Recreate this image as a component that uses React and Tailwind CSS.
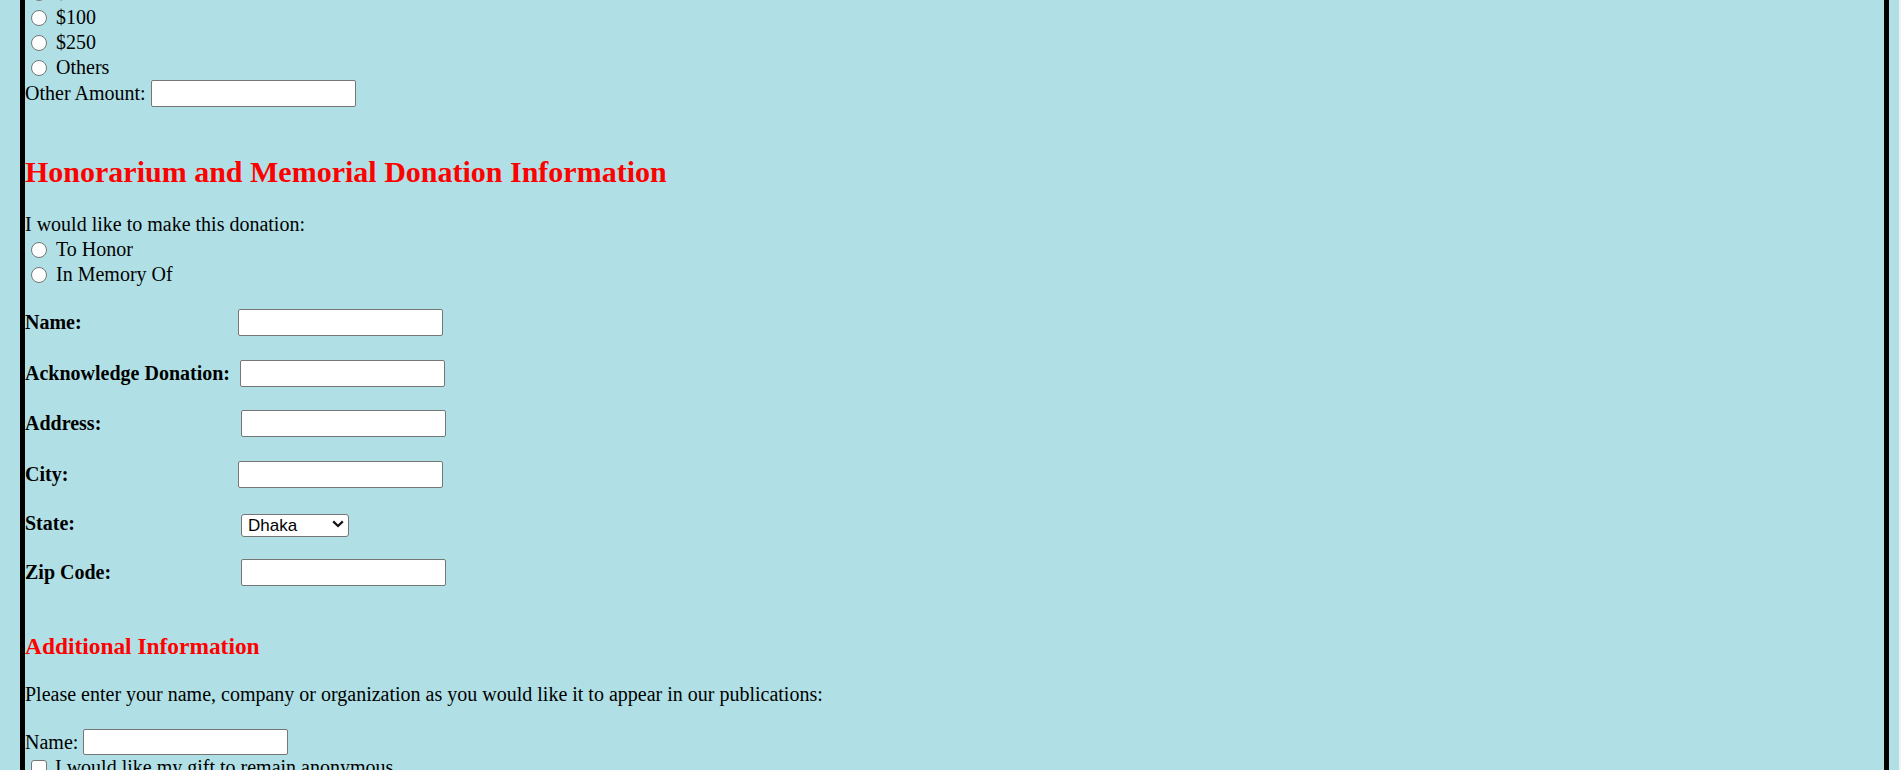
import React from "react";

function Radio({ label, name }) {
  return (
    <div className="flex h-[25px] items-center">
      <input
        type="radio"
        name={name}
        className="ml-[6px] h-[16px] w-[16px] shrink-0 appearance-none rounded-full border border-[#767676] bg-white"
      />
      <span className="ml-[9px]">{label}</span>
    </div>
  );
}

function Field({ label, labelW, mt, children, h = "h-[27px]" }) {
  return (
    <div className={`flex ${h} items-center ${mt}`}>
      <span className={`${labelW} shrink-0 font-bold`}>{label}</span>
      {children}
    </div>
  );
}

function TextBox({ className = "" }) {
  return (
    <input
      type="text"
      className={`h-[27px] w-[205px] shrink-0 rounded-[2px] border border-[#767676] bg-white px-[3px] font-['Liberation_Sans',Arial,sans-serif] text-[16.6px] ${className}`}
    />
  );
}

export default function App() {
  return (
    <div className="flex h-[770px] w-full overflow-hidden bg-[#b0e0e6]">
      <div className="h-full flex-1 pl-[20px] pr-[10px]">
        <div className="h-full overflow-hidden border-x-[5px] border-black font-['Liberation_Serif','Times_New_Roman',serif] text-[20px] leading-[25px] text-black">
          <div className="-mt-[20px]">
            <Radio label="$50" name="amount" />
            <Radio label="$100" name="amount" />
            <Radio label="$250" name="amount" />
            <Radio label="Others" name="amount" />
            <div className="flex h-[27px] items-center">
              <span>Other Amount:</span>
              <TextBox className="ml-[5px]" />
            </div>

            <h2 className="mt-[48px] text-[30px] font-bold leading-[34px] text-[#ff0000]">
              Honorarium and Memorial Donation Information
            </h2>

            <p className="mt-[23px] h-[25px]">I would like to make this donation:</p>
            <Radio label="To Honor" name="type" />
            <Radio label="In Memory Of" name="type" />

            <Field label="Name:" labelW="w-[213px]" mt="mt-[22px]">
              <TextBox />
            </Field>
            <Field label="Acknowledge Donation:" labelW="w-[215px]" mt="mt-[24px]">
              <TextBox />
            </Field>
            <Field label="Address:" labelW="w-[216px]" mt="mt-[23px]">
              <TextBox />
            </Field>
            <Field label="City:" labelW="w-[213px]" mt="mt-[24px]">
              <TextBox />
            </Field>
            <Field label="State:" labelW="w-[216px]" mt="mt-[24px]" h="h-[23px]">
              <div className="relative h-[23px] w-[108px] shrink-0">
                <select
                  defaultValue="Dhaka"
                  className="h-[23px] w-[108px] appearance-none rounded-[3px] border border-[#767676] bg-white pl-[6px] font-['Liberation_Sans',Arial,sans-serif] text-[17px] leading-[21px] text-black"
                >
                  <option>Dhaka</option>
                  <option>Chittagong</option>
                  <option>Khulna</option>
                  <option>Rajshahi</option>
                  <option>Sylhet</option>
                </select>
                <svg
                  className="pointer-events-none absolute right-[5px] top-[8px]"
                  width="12"
                  height="8"
                  viewBox="0 0 12 8"
                  fill="none"
                >
                  <path d="M1.2 1.4 L6 6 L10.8 1.4" stroke="#111" strokeWidth="2.2" />
                </svg>
              </div>
            </Field>
            <Field label="Zip Code:" labelW="w-[216px]" mt="mt-[24px]">
              <TextBox />
            </Field>

            <h3 className="mt-[47px] text-[23.4px] font-bold leading-[27px] text-[#ff0000]">
              Additional Information
            </h3>

            <p className="mt-[22px] h-[25px]">
              Please enter your name, company or organization as you would like it to appear in our publications:
            </p>

            <div className="mt-[22px] flex h-[26px] items-center">
              <span>Name:</span>
              <TextBox className="ml-[5px] !h-[26px]" />
            </div>
            <div className="flex h-[25px] items-center">
              <input
                type="checkbox"
                className="ml-[6px] h-[16px] w-[16px] shrink-0 appearance-none rounded-[3px] border border-[#767676] bg-white"
              />
              <span className="ml-[8px]">I would like my gift to remain anonymous</span>
            </div>
          </div>
        </div>
      </div>
      <div className="h-full w-[2px] bg-[#eef2f3]" />
    </div>
  );
}
